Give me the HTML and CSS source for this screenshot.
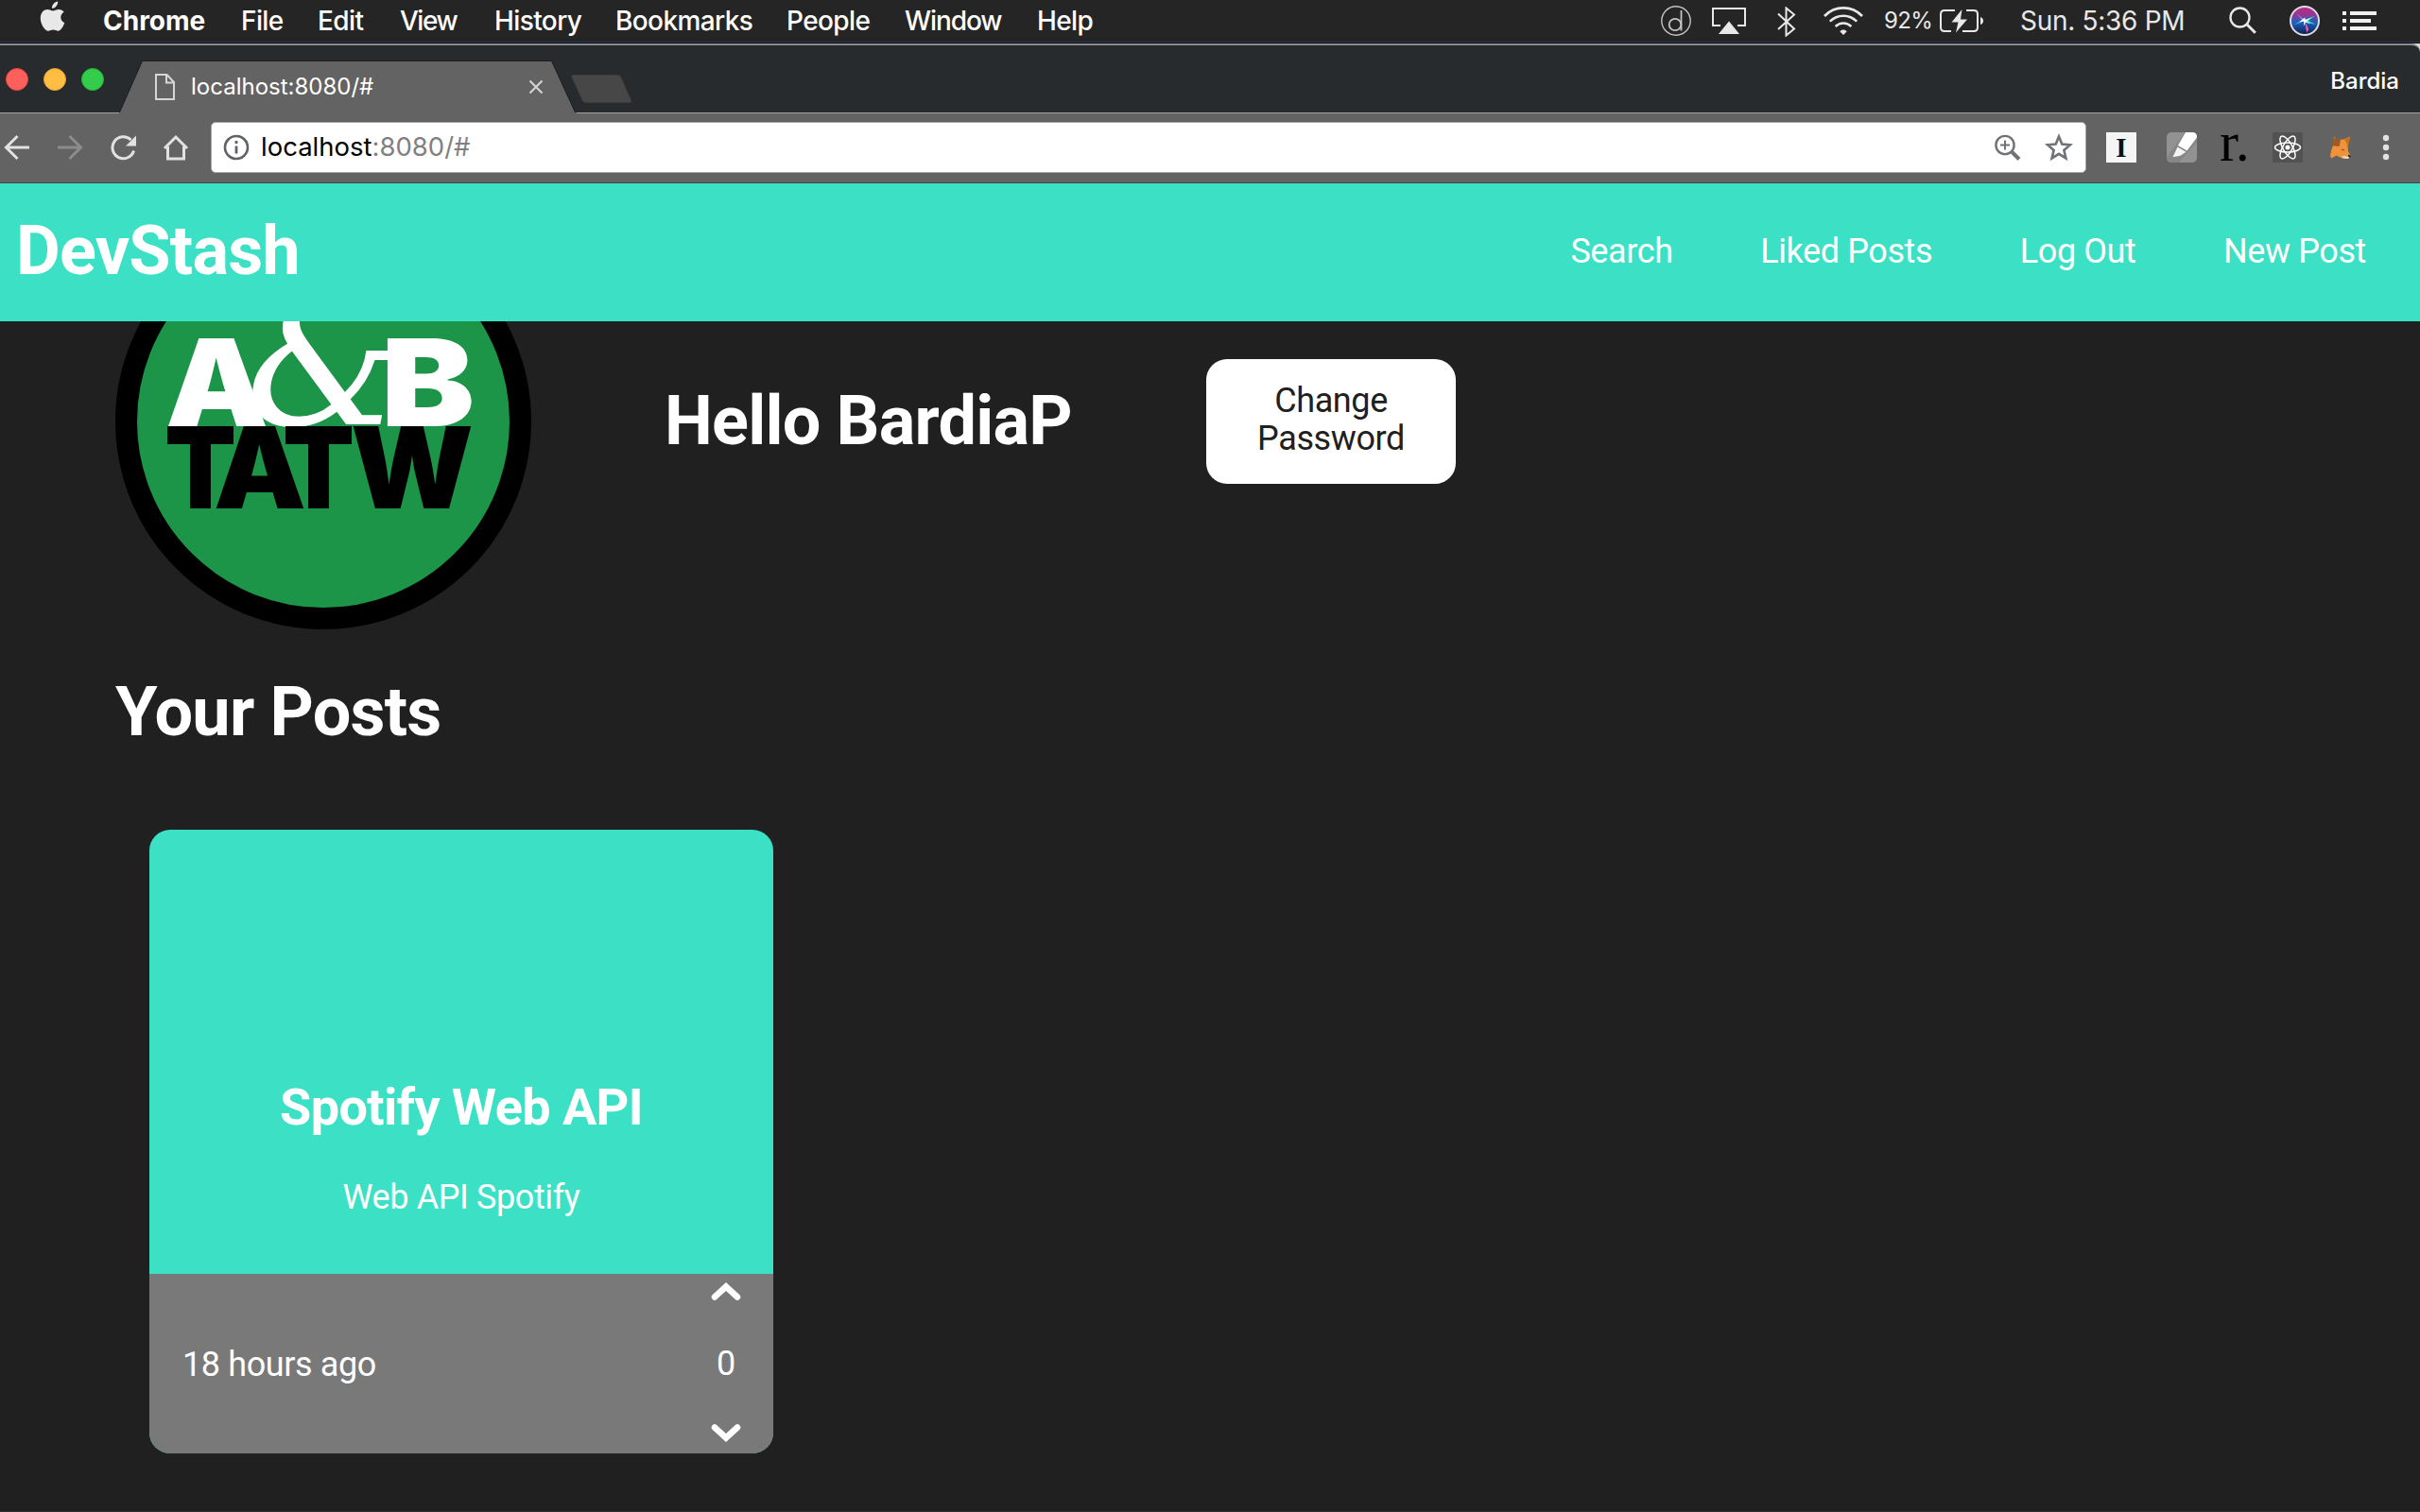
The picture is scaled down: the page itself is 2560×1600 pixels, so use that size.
FILE: index.html
```html
<!DOCTYPE html>
<html lang="en">
<head>
<meta charset="utf-8">
<title>DevStash</title>
<link rel="stylesheet" href="styles.css">
</head>
<body>
<div class="menubar">
  <svg class="apple" width="28" height="34" viewBox="0 0 28 34" fill="#e8e8e8"><path d="M19.200 0.500c.3 3.600-2.700 7.400-6.200 7.300-.4-3.400 2.900-7 6.200-7.300zM25.700 11.700c-2.200 1.300-3.400 3.200-3.400 5.500 0 2.700 1.500 4.900 4 5.900-1 3.300-3.800 8.600-6.800 8.700-1.900 0-2.800-1.200-5.200-1.200-2.300 0-3.300 1.200-5.100 1.200C5.300 31.800.8 24.300.8 18.300.8 12.200 4.600 9 8.300 9c2.300 0 4.200 1.500 5.700 1.500 1.400 0 3.600-1.600 6.400-1.600 2 0 4 1 5.300 2.800z"/></svg>
  <nav class="menus">
    <span class="app">Chrome</span><span>File</span><span>Edit</span><span class="view">View</span><span>History</span><span>Bookmarks</span><span>People</span><span class="window">Window</span><span>Help</span>
  </nav>
  <div class="status">
    <svg width="32" height="32" viewBox="0 0 32 32" fill="none" stroke="#c4c4c4"><circle cx="16" cy="16" r="15.200" stroke-width="1.400"/><ellipse cx="15" cy="20" rx="6.300" ry="6.200" stroke-width="1.800"/><path d="M21.500 5v21.500" stroke-width="1.800"/></svg>
    <svg class="airplay" width="36" height="28" viewBox="0 0 36 28"><path d="M9 19H1V1h34v18h-8" fill="none" stroke="#e8e8e8" stroke-width="2"/><path d="M18 14.500L29 28H7z" fill="#e8e8e8"/></svg>
    <svg class="bluetooth" width="20" height="32" viewBox="0 0 20 32" fill="none" stroke="#e8e8e8" stroke-width="2"><path d="M1 7.500l17 16-8.500 7V1.500l8.500 7L1 24"/></svg>
    <svg class="wifi" width="42" height="30" viewBox="0 0 42 30" fill="none" stroke="#e8e8e8" stroke-width="2.600"><path d="M1 10C12-1.500 30-1.500 41 10M6.800 15.700c8-8 20.400-8 28.400 0M12.600 21c5-4.600 11.800-4.600 16.800 0"/><path d="M17.300 26.300c2-2.300 5.400-2.300 7.400 0L21 30z" fill="#e8e8e8" stroke="none"/></svg>
    <span class="percent">92%</span>
    <svg class="battery" width="46" height="26" viewBox="0 0 46 26" fill="none" stroke="#e8e8e8" stroke-width="2"><path d="M16 2H5Q1 2 1 6v14q0 4 4 4h7M28 2h8q4 0 4 4v14q0 4-4 4H24"/><path d="M43 9q3 1 3 4t-3 4z" fill="#e8e8e8" stroke="none"/><path d="M23.500 1L12.500 14.500h7L17 25.500l12-14h-7z" fill="#e8e8e8" stroke="none"/></svg>
    <span class="clock">Sun. 5:36 PM</span>
    <svg class="search" width="30" height="30" viewBox="0 0 30 30" fill="none" stroke="#e8e8e8" stroke-width="2.300"><circle cx="11.500" cy="11.500" r="10"/><path d="M18.800 18.800l9 9" stroke-width="3"/></svg>
    <svg class="siri" width="32" height="32" viewBox="0 0 32 32">
      <defs>
        <linearGradient id="orb" x1="0" y1="0" x2="0" y2="1"><stop offset="0" stop-color="#c8287c"/><stop offset=".32" stop-color="#8b3a96"/><stop offset=".55" stop-color="#1e5fc0"/><stop offset="1" stop-color="#101d48"/></linearGradient>
      </defs>
      <circle cx="16" cy="16" r="15" fill="url(#orb)" stroke="#dcdce4" stroke-width="2"/>
      <path d="M16 15l11-4.500-7 5.500 8 4-10-2z" fill="#2fe0c0"/><path d="M16 16L3.500 21l10-6z" fill="#3cb4f0"/><path d="M16 16l2.200 12.500 2-3.500z" fill="#ff5aa8"/><path d="M16 15L7 8l7 8z" fill="#9a7cf0"/>
      <path d="M16 12.500l.8 2.500 6-2-4.800 3.200 4 2.800-5-1.500-2 4 .2-5-5.200 1z" fill="#fff"/>
    </svg>
    <svg class="list" width="36" height="20" viewBox="0 0 36 20" fill="#f0f0f0"><path d="M0 0h4v4H0zM8 0h28v4H8zM0 8h4v4H0zM8 8h22v4H8zM0 16h4v4H0zM8 16h28v4H8z"/></svg>
  </div>
</div>

<div class="window-frame">
  <div class="tabstrip">
    <div class="lights"><i class="close"></i><i class="minimize"></i><i class="maximize"></i></div>
    <div class="tab">
      <svg class="tab-shape" width="484" height="56" viewBox="0 0 484 56"><path d="M0 56L24.500.5H457.500L483 56z" fill="#636363" stroke="#1b1e20"/><path d="M0 56H484" stroke="#636363" stroke-width="2"/></svg>
      <svg width="21" height="28" viewBox="0 0 21 28" fill="none" stroke="#d6d6d6" stroke-width="2"><path d="M1 1h11.500L20 9v18H1zM12 1v8.500h8"/></svg>
      <span>localhost:8080/#</span>
      <svg class="tab-close" width="16" height="16" viewBox="0 0 16 16" stroke="#d6d6d6" stroke-width="2"><path d="M1.500 1.500l13 13M14.500 1.500l-13 13"/></svg>
    </div>
    <svg class="new-tab" width="65" height="30" viewBox="0 0 65 30"><path d="M2 .5h48q2 0 3 2.500l10.500 24q1 2.500-1.500 2.500H15q-2 0-3-2.500L1 3Q0 .5 2 .5z" fill="#474747" stroke="#3a3c3d"/></svg>
    <span class="profile-name">Bardia</span>
  </div>

  <div class="toolbar">
    <div class="nav-buttons">
      <svg viewBox="0 0 28 28" fill="none" stroke="#e2e2e2" stroke-width="3"><path d="M27 14H3M14.500 2L2.500 14l12 12"/></svg>
      <svg viewBox="0 0 28 28" fill="none" stroke="#8c8c8c" stroke-width="3"><path d="M1 14h24M13.500 2l12 12-12 12"/></svg>
      <svg viewBox="0 0 28 28" fill="none" stroke="#e2e2e2" stroke-width="3"><path d="M25.500 17.500A11.500 11.500 0 1 1 22.500 6"/><path d="M28 1.500v11H17z" fill="#e2e2e2" stroke="none"/></svg>
      <svg viewBox="0 0 28 28" fill="none" stroke="#e2e2e2" stroke-width="3"><path d="M2 15L14 3l12 12M5.500 13v13h17V13"/></svg>
    </div>
    <div class="omnibox">
      <svg width="28" height="28" viewBox="0 0 28 28" fill="none" stroke="#5f6368"><circle cx="14" cy="14" r="12" stroke-width="2.600"/><path d="M14 12.500v8M14 7v3" stroke-width="2.800"/></svg>
      <span class="url"><b>localhost</b>:8080/#</span>
      <svg class="zoom" width="28" height="28" viewBox="0 0 28 28" fill="none" stroke="#6f7378"><circle cx="11" cy="11.500" r="9.600" stroke-width="2.400"/><path d="M11 6.500v10M6 11.500h10" stroke-width="2"/><path d="M18.500 19l7.500 7.500" stroke-width="4"/></svg>
      <svg width="30" height="30" viewBox="0 0 30 30" fill="none" stroke="#6f7378" stroke-width="2.600"><path d="M15 3.500l3.300 8 8.700.7-6.600 5.700 2 8.500-7.400-4.600-7.400 4.600 2-8.500L3 12.200l8.700-.7z"/></svg>
    </div>
    <div class="extensions">
      <span class="instapaper">I</span>
      <svg class="marker" viewBox="0 0 32 32"><rect width="32" height="32" rx="5" fill="#929292"/><path d="M0 27L19 0h8q5 0 5 5v5L13 32H5q-5 0-5-5z" fill="#868686"/><path d="M20 0h7q5 0 5 5v.5L21.500 19.500 12 14z" fill="#fff"/><path d="M11.500 15.500l9 5.300-6 4-6.500 1.200H6.500l2-4z" fill="#f4f4f4"/></svg>
      <span class="readability">r.</span>
      <svg viewBox="0 0 32 32" fill="none" stroke="#fff" stroke-width="1.500"><rect width="32" height="32" rx="2" fill="#525252" stroke="none"/><ellipse cx="16" cy="16" rx="13.500" ry="5"/><ellipse cx="16" cy="16" rx="13.500" ry="5" transform="rotate(60 16 16)"/><ellipse cx="16" cy="16" rx="13.500" ry="5" transform="rotate(120 16 16)"/><circle cx="16" cy="16" r="2.500" fill="#fff" stroke="none"/></svg>
      <svg viewBox="0 0 32 32"><path d="M9 4.500l5 3.500 5-.5 7-3-2.500 9.500.5 6 2.500 5-2 2.500-6 .5-7-3.500-5 3-1.500-2 1-6 2.500-7z" fill="#f0923a"/><path d="M10 4.500l6 4-1.500 6.500-8-1z" fill="#9b5a26"/><path d="M26.500 4.500L20 7.500l4 7z" fill="#c9701f"/><path d="M17 25l5 .5 3 1-1 1.500-4.500-.5z" fill="#e8e0d8"/><path d="M24 23.500l3 1.500-1 1.500-2-1z" fill="#222"/><path d="M16 17.500l4.500 1-2 1z" fill="#7a4a25"/></svg>
      <svg class="kebab" viewBox="0 0 32 32" fill="#e2e2e2"><circle cx="16" cy="6" r="3.200"/><circle cx="16" cy="16" r="3.200"/><circle cx="16" cy="26" r="3.200"/></svg>
    </div>
  </div>
</div>

<header class="site-header">
  <h1>DevStash</h1>
  <nav><a>Search</a><a>Liked Posts</a><a>Log Out</a><a>New Post</a></nav>
</header>

<main>
  <section class="profile">
    <svg class="avatar" viewBox="0 0 440 440">
      <circle cx="220" cy="220" r="208.500" fill="#1c9549" stroke="#000" stroke-width="23"/>
      <g class="logo-bold" fill="#fff" font-size="128">
        <text x="53" y="225" textLength="109" lengthAdjust="spacingAndGlyphs">A</text>
        <text x="281" y="225" textLength="99" lengthAdjust="spacingAndGlyphs">B</text>
      </g>
      <text class="logo-amp" x="138" y="223" fill="#fff" font-size="190" textLength="164" lengthAdjust="spacingAndGlyphs">&amp;</text>
      <g class="logo-bold" fill="#000" font-size="119.500">
        <text x="52" y="312" textLength="76" lengthAdjust="spacingAndGlyphs">T</text>
        <text x="104" y="312" textLength="98" lengthAdjust="spacingAndGlyphs">A</text>
        <text x="177" y="312" textLength="76" lengthAdjust="spacingAndGlyphs">T</text>
        <text x="249" y="312" textLength="130" lengthAdjust="spacingAndGlyphs">W</text>
      </g>
    </svg>
    <h2>Hello BardiaP</h2>
    <button>Change<br>Password</button>
  </section>
  <h2 class="section-title">Your Posts</h2>
  <article class="card">
    <div class="card-body">
      <h3>Spotify Web API</h3>
      <p>Web API Spotify</p>
    </div>
    <footer>
      <span>18 hours ago</span>
      <div class="votes">
        <svg width="32" height="20" viewBox="0 0 32 20"><path d="M4 15.500l12-11 12 11"/></svg>
        <span>0</span>
        <svg width="32" height="20" viewBox="0 0 32 20"><path d="M4 4.500l12 11 12-11"/></svg>
      </div>
    </footer>
  </article>
</main>
</body>
</html>
```
FILE: styles.css
```css
* { box-sizing: border-box; }
body {
  margin: 0;
  width: 2560px;
  height: 1600px;
  overflow: hidden;
  display: flex;
  flex-direction: column;
  background: #202020;
  color: #fff;
  font-family: Roboto, sans-serif;
}
svg { display: block; flex: none; }
h1, h2, h3, p { margin: 0; }

/* System menu bar */
.menubar {
  flex: none;
  height: 46px;
  padding: 0 46px 2px 41px;
  display: flex;
  align-items: center;
  background: linear-gradient(#252525 44px, #26395a 44px, #26395a 45px, #0b0b0f 45px);
  font: 500 28px/44px Inter, sans-serif;
}
.apple { margin: -8px 39px 0 1px; height: 34px; }
.menus {
  display: grid;
  grid-template-columns: 146px 81px 87px 100px 128px 181px 125px 140px 100px;
  letter-spacing: -0.6px;
}
.menus .app { font-weight: 700; letter-spacing: 0; }
.menus .view { letter-spacing: -1.5px; }
.menus .window { letter-spacing: -1.1px; }
.status {
  margin-left: auto;
  display: flex;
  align-items: center;
  color: #e8e8e8;
  font-weight: 400;
}
.airplay { margin-left: 22px; }
.bluetooth { margin-left: 33px; margin-top: 2px; }
.wifi { margin-left: 29px; }
.percent { width: 50px; margin-left: 22px; font-size: 24px; letter-spacing: -0.6px; white-space: nowrap; }
.battery { margin-left: 9px; }
.clock { width: 173px; margin-left: 39px; letter-spacing: -0.3px; white-space: nowrap; }
.search { margin-left: 48px; }
.siri { margin-left: 34px; }
.list { margin-left: 24px; }

/* Browser window */
.window-frame { flex: none; height: 148px; background: #d8d8d8; }
.tabstrip {
  height: 74px;
  padding-right: 22px;
  display: flex;
  align-items: flex-end;
  background: #272b2e;
  border-top: 2px solid #8c8c8c;
  border-bottom: 1px solid #a0a0a0;
  border-top-right-radius: 9px;
  font-family: Inter, sans-serif;
}
.lights { display: flex; gap: 16px; padding: 0 16px 23px 6px; }
.lights i { width: 24px; height: 24px; border-radius: 50%; border: 1px solid; }
.close { background: #ff605c; border-color: #e2463f !important; }
.minimize { background: #ffbd44; border-color: #e0a032 !important; }
.maximize { background: #33cc4b; border-color: #28b03c !important; }
.tab {
  position: relative;
  width: 484px;
  height: 56px;
  margin-bottom: -1px;
  padding: 0 35px 1px 38px;
  display: flex;
  align-items: center;
  font-size: 24px;
}
.tab-shape { position: absolute; left: 0; top: 0; }
.tab > span, .tab > svg:not(.tab-shape) { position: relative; }
.tab > span { margin-left: 17px; }
.tab-close { margin-left: auto; }
.new-tab { margin: 0 0 10px -6px; }
.profile-name { margin: 0 0 17px auto; font: 500 24px/32px Inter, sans-serif; }

.toolbar {
  height: 74px;
  padding-top: 9px;
  display: flex;
  align-items: flex-start;
  background: #636363;
  border-bottom: 1px solid #444;
}
.nav-buttons {
  width: 223px;
  height: 54px;
  padding-left: 4px;
  display: flex;
  align-items: center;
  gap: 28px;
}
.nav-buttons svg { width: 28px; height: 28px; }
.omnibox {
  width: 1984px;
  height: 54px;
  padding: 0 13px 0 12px;
  display: flex;
  align-items: center;
  background: #fff;
  border: 1px solid #a8a8a8;
  border-radius: 5px;
  color: #808080;
  font: 400 27.5px/52px Inter, sans-serif;
}
.url { margin: -2px 0 0 12px; }
.url b { font-weight: 400; color: #000; }
.zoom { margin: 0 25px 0 auto; }
.extensions {
  height: 54px;
  margin-left: 21px;
  display: flex;
  align-items: center;
  gap: 24px;
}
.extensions > * { width: 32px; height: 32px; }
.instapaper { background: #f5f5f5; color: #111; font: 700 29px/32px "Liberation Serif", serif; text-align: center; }
.marker { margin-left: 8px; }
.readability { color: #000; font: 400 60px/32px "Liberation Serif", serif; margin-top: -13px; }
.kebab { margin-left: -8px; }

/* Site header */
.site-header {
  flex: none;
  height: 146px;
  padding: 0 57px 2px 17px;
  display: flex;
  align-items: center;
  justify-content: space-between;
  background: #3ce1c5;
  letter-spacing: -0.011em;
}
h1, h2 { font-size: 72px; font-weight: 700; line-height: 84px; letter-spacing: -0.011em; }
.site-header nav { display: flex; gap: 92.6px; font-size: 36px; letter-spacing: -0.011em; }

/* Profile page */
main {
  flex: 1;
  min-height: 0;
  padding-left: 122px;
  overflow: hidden;
  font-size: 36px;
  letter-spacing: -0.011em;
  border-bottom: 1px solid #333;
}
.profile { display: flex; align-items: center; height: 440px; margin-top: -114px; }
.avatar { width: 440px; height: 440px; }
.logo-bold { font-family: Inter, sans-serif; font-weight: 900; letter-spacing: 0; }
.logo-amp { font-family: "DejaVu Serif", serif; font-style: italic; letter-spacing: 0; }
.profile h2 { margin-left: 141px; width: 569px; }
.profile button {
  width: 264px;
  height: 132px;
  margin-left: 4px;
  padding: 0 0 4px;
  border: 0;
  border-radius: 22px;
  background: #fff;
  color: #202020;
  font: 400 36px/40px Roboto, sans-serif;
  letter-spacing: -0.011em;
}
.section-title { margin-top: 46px; }
.card {
  width: 660px;
  height: 660px;
  margin: 82px 0 0 36px;
  display: flex;
  flex-direction: column;
  border-radius: 22px;
  overflow: hidden;
  background: #3ce1c5;
}
.card-body {
  height: 470px;
  padding-bottom: 60px;
  display: flex;
  flex-direction: column;
  justify-content: flex-end;
  align-items: center;
}
.card h3 { font-size: 54px; line-height: 64px; margin-bottom: 42px; letter-spacing: -0.011em; }
.card p { line-height: 42px; }
.card footer {
  flex: 1;
  padding: 0 34px 0 35px;
  display: flex;
  justify-content: space-between;
  align-items: center;
  background: #797979;
}
.card footer span { padding-top: 2px; }
.votes {
  height: 100%;
  padding: 9px 0 12px;
  display: flex;
  flex-direction: column;
  justify-content: space-between;
  align-items: center;
}
.votes path { fill: none; stroke: #fff; stroke-width: 6.5; stroke-linecap: round; }
```
